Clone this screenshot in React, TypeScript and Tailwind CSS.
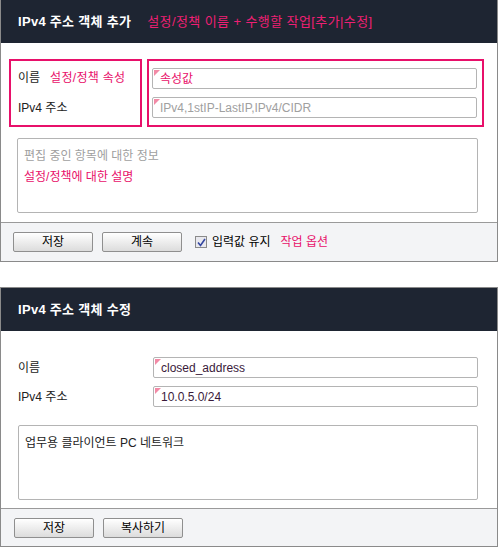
import React from 'react';

const font = { fontFamily: '"Liberation Sans", "Noto Sans CJK KR", sans-serif' };

const Field: React.FC<{ value: string; tone?: 'pink' | 'hint' | 'dark' }> = ({ value, tone = 'dark' }) => {
  const color =
    tone === 'pink' ? 'text-[#e8106a]' : tone === 'hint' ? 'text-[#a0a0a0]' : 'text-[#3a1a3a]';
  return (
    <div className="relative flex h-[21px] items-center rounded-[2px] border border-[#b4b4b4] bg-white pl-[7px]">
      {/* required marker */}
      <span className="absolute left-[1px] top-[1px] h-0 w-0 border-r-[6px] border-t-[6px] border-r-transparent border-t-[#f28aa6]" />
      <span className={`text-[12px] leading-none ${color}`}>{value}</span>
    </div>
  );
};

const Btn: React.FC<{ label: string }> = ({ label }) => (
  <button className="h-[20px] w-[80px] rounded-[2px] border border-[#8f8f8f] bg-gradient-to-b from-white to-[#dcdcdc] text-[12px] leading-none text-black">
    {label}
  </button>
);

const Header: React.FC<{ title: string; note?: string }> = ({ title, note }) => (
  <div className="flex h-[43px] items-center gap-[16px] bg-[#1e2532] pl-[17px]">
    <span className="text-[13px] font-bold tracking-[0.3px] text-white">{title}</span>
    {note && <span className="text-[13px] tracking-[0.4px] text-[#ef1f74]">{note}</span>}
  </div>
);

export default function App() {
  return (
    <div className="w-[498px] bg-white" style={font}>
      {/* Add panel */}
      <div className="border border-t-0 border-[#8a8a8a]">
        <Header title="IPv4 주소 객체 추가" note="설정/정책 이름 + 수행할 작업[추가|수정]" />
        <div className="pl-[8px] pr-[13px] pt-[16px]">
          <div className="flex gap-[5px]">
            <div className="flex h-[68px] w-[133px] flex-col justify-center gap-[12px] border-2 border-[#e8106a] pl-[7px] text-[12px]">
              <div className="flex gap-[10px]">
                <span className="text-[#222]">이름</span>
                <span className="tracking-[0.3px] text-[#e8106a]">설정/정책 속성</span>
              </div>
              <span className="text-[#222]">IPv4 주소</span>
            </div>
            <div className="flex h-[68px] flex-1 flex-col gap-[8px] border-2 border-[#e8106a] pl-[3px] pr-[5px] pt-[7px]">
              <Field value="속성값" tone="pink" />
              <Field value="IPv4,1stIP-LastIP,IPv4/CIDR" tone="hint" />
            </div>
          </div>
          <div className="ml-[8px] mr-[6px] mt-[11px] h-[75px] rounded-[2px] border border-[#b4b4b4] px-[6px] pt-[7px] text-[12px] leading-[21px]">
            <div className="text-[#a0a0a0]">편집 중인 항목에 대한 정보</div>
            <div className="text-[#e8106a]">설정/정책에 대한 설명</div>
          </div>
        </div>
        <div className="mt-[9px] flex h-[39px] items-center gap-[9px] border-t border-[#9a9a9a] bg-[#f3f4f6] pl-[12px]">
          <Btn label="저장" />
          <Btn label="계속" />
          <label className="ml-[4px] flex items-center gap-[5px] text-[12px]">
            <span className="flex h-[12px] w-[12px] items-center justify-center border border-[#8a8a8a] bg-[#e8e8ee]">
              <svg width="9" height="9" viewBox="0 0 9 9">
                <path d="M1 4.5 L3.5 7.5 L8 1" fill="none" stroke="#3346a0" strokeWidth="1.6" />
              </svg>
            </span>
            <span className="text-black">입력값 유지</span>
            <span className="ml-[5px] text-[#e8106a]">작업 옵션</span>
          </label>
        </div>
      </div>

      <div className="h-[25px]" />

      {/* Edit panel */}
      <div className="border border-[#8a8a8a]">
        <Header title="IPv4 주소 객체 수정" />
        <div className="flex flex-col gap-[8px] pl-[17px] pr-[19px] pt-[26px]">
          <div className="flex items-center">
            <span className="w-[135px] text-[12px] text-[#222]">이름</span>
            <div className="flex-1">
              <Field value="closed_address" />
            </div>
          </div>
          <div className="flex items-center">
            <span className="w-[135px] text-[12px] text-[#222]">IPv4 주소</span>
            <div className="flex-1">
              <Field value="10.0.5.0/24" />
            </div>
          </div>
          <div className="mt-[10px] h-[75px] rounded-[2px] border border-[#b4b4b4] px-[6px] pt-[8px] text-[12px] text-[#222]">
            업무용 클라이언트 PC 네트워크
          </div>
        </div>
        <div className="mt-[8px] flex h-[38px] items-center gap-[9px] border-t border-[#9a9a9a] bg-[#f3f4f6] pl-[13px]">
          <Btn label="저장" />
          <Btn label="복사하기" />
        </div>
      </div>
    </div>
  );
}
